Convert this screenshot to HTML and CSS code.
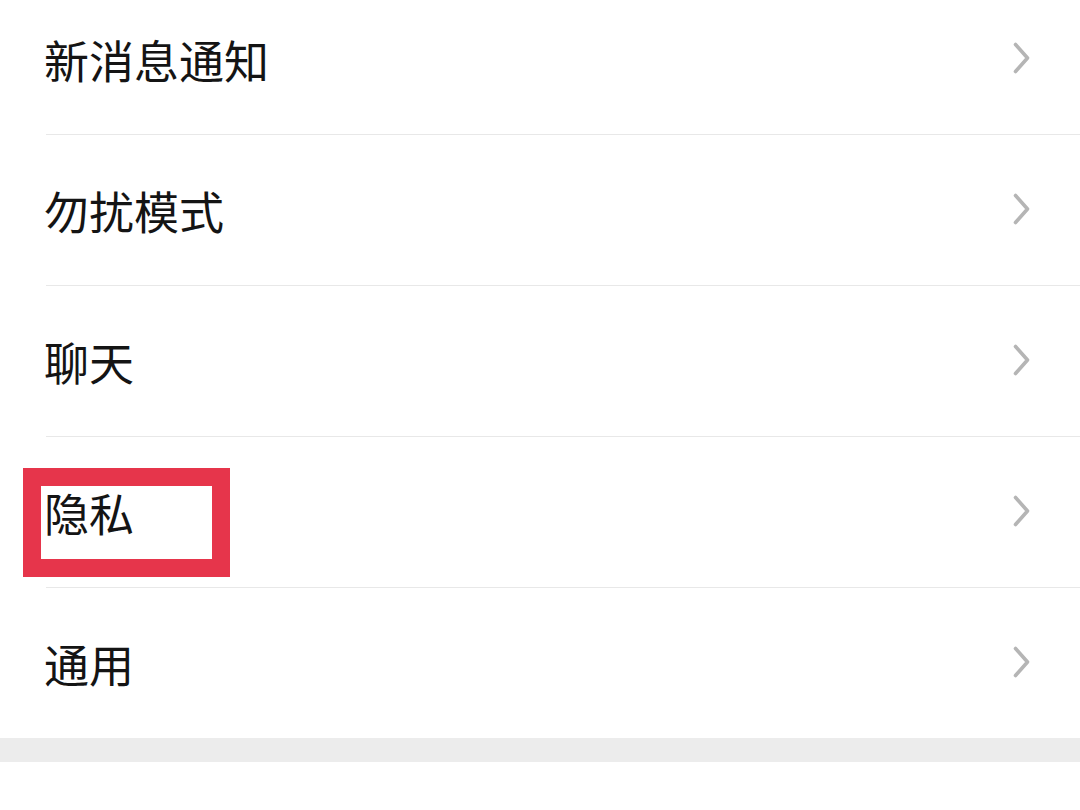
FILE: index.html
```html
<!DOCTYPE html>
<html lang="zh-CN">
<head>
<meta charset="utf-8">
<title>设置</title>
<link rel="stylesheet" href="styles.css">
</head>
<body>
<div class="list">
  <div class="row"><span class="label">新消息通知</span><svg class="chev" viewBox="0 0 17 32" width="17" height="32"><polyline points="2.5,2.5 14.5,16 2.5,29.5"/></svg></div>
  <div class="row"><span class="label">勿扰模式</span><svg class="chev" viewBox="0 0 17 32" width="17" height="32"><polyline points="2.5,2.5 14.5,16 2.5,29.5"/></svg></div>
  <div class="row"><span class="label">聊天</span><svg class="chev" viewBox="0 0 17 32" width="17" height="32"><polyline points="2.5,2.5 14.5,16 2.5,29.5"/></svg></div>
  <div class="row marked"><span class="mark"></span><span class="label">隐私</span><svg class="chev" viewBox="0 0 17 32" width="17" height="32"><polyline points="2.5,2.5 14.5,16 2.5,29.5"/></svg></div>
  <div class="row last"><span class="label">通用</span><svg class="chev" viewBox="0 0 17 32" width="17" height="32"><polyline points="2.5,2.5 14.5,16 2.5,29.5"/></svg></div>
</div>
<div class="band"></div>
</body>
</html>
```

FILE: styles.css
```css
html, body {
  margin: 0;
  padding: 0;
  background: #ffffff;
  height: 810px;
  overflow: hidden;
}
body {
  font-family: "Noto Sans CJK SC", "Noto Sans", sans-serif;
  color: #141414;
}
.list {
  margin-top: -16px;
}
.row {
  position: relative;
  height: 150px;
  margin-left: 46px;
  padding-right: 50px;
  display: flex;
  align-items: center;
  justify-content: space-between;
  border-bottom: 1px solid #e8e8e8;
}
.row.last {
  border-bottom: none;
}
.label {
  position: relative;
  margin-left: -2px;
  margin-top: 0;
  font-size: 45px;
  line-height: 1;
  letter-spacing: 0;
}
.chev {
  display: block;
  margin-top: -2px;
}
.chev polyline {
  fill: none;
  stroke: #b5b5b5;
  stroke-width: 3.6;
  stroke-linecap: round;
  stroke-linejoin: round;
}
.mark {
  position: absolute;
  left: -23px;
  top: 31px;
  width: 171px;
  height: 73px;
  border: 18px solid #e6354b;
}
.band {
  height: 24px;
  background: #ececec;
}
```
